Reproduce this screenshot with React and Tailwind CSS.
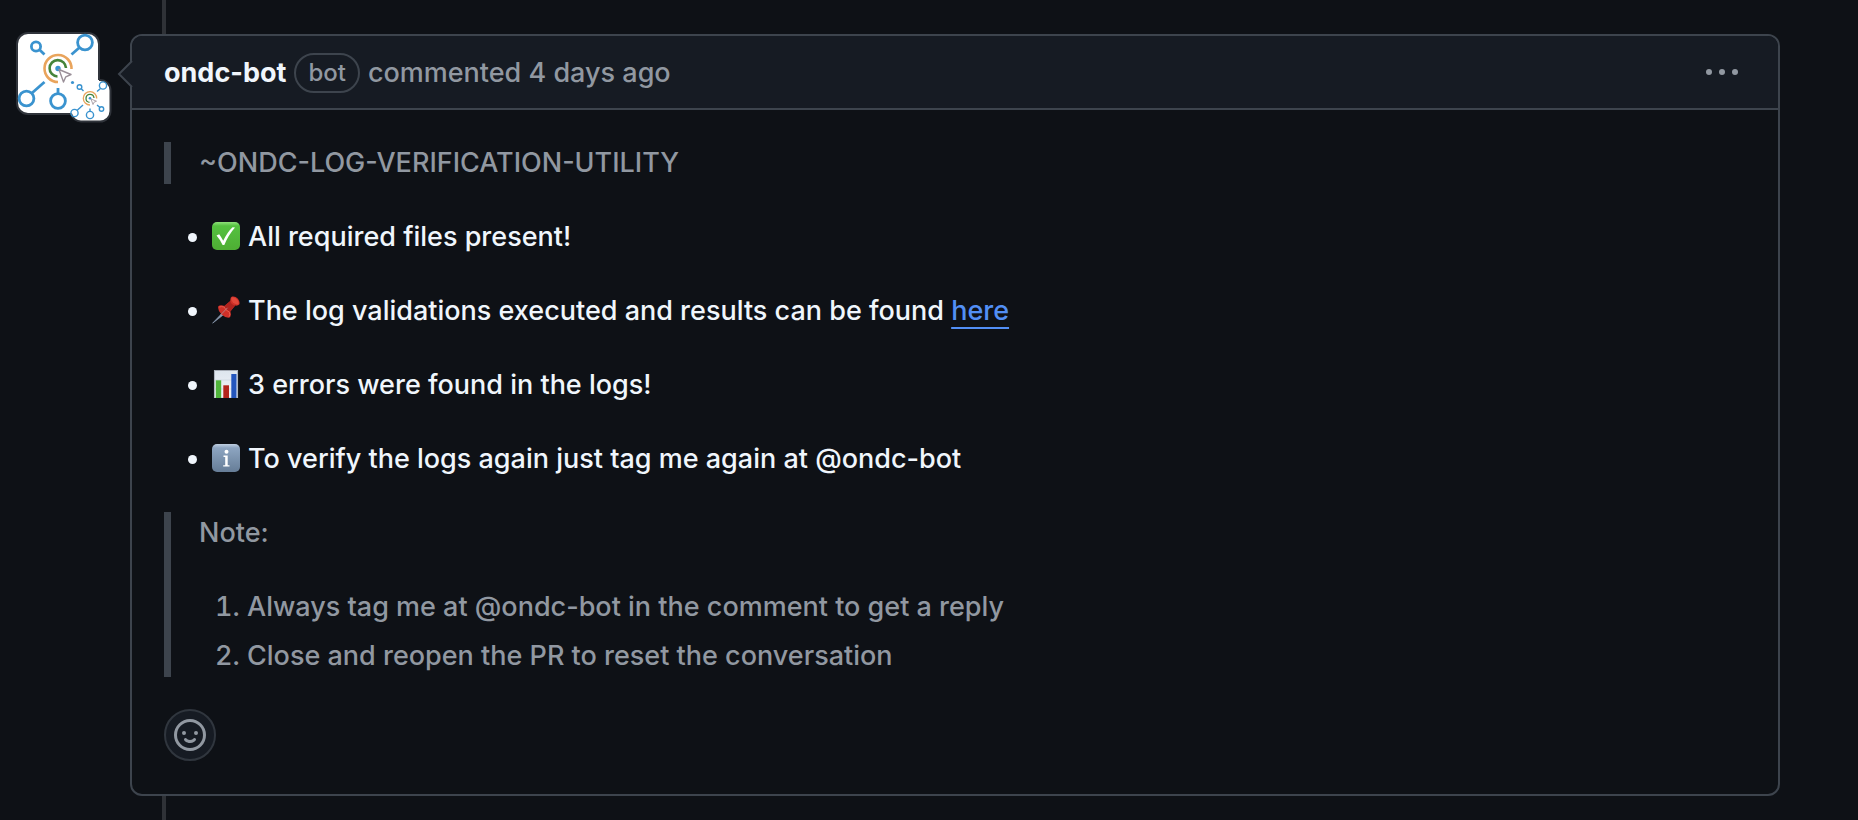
const EMOJI_CLASS = "mr-2 inline-block size-7 shrink-0 align-[-4px]";

function BotArt() {
  return (
    <>
      <g fill="none" stroke="#3a93cf" strokeWidth="2.8">
        <circle cx="19" cy="14.500" r="4.600" />
        <path d="M22.500 17.800 27.500 22.500" />
        <circle cx="68" cy="10.500" r="7.400" />
        <path d="M62.500 15.500 54.500 22.500" />
        <circle cx="9.500" cy="66.500" r="7.400" />
        <path d="M15 61 27.500 50" />
        <circle cx="41" cy="69" r="7.400" />
        <path d="M41 61.500V56" />
      </g>
      <path d="M54.500 37A13.500 13.500 0 1 0 41 50" fill="none" stroke="#e9a45c" strokeWidth="2.6" />
      <path d="M49 36A8.200 8.200 0 1 0 40.500 44.500" fill="none" stroke="#45843a" strokeWidth="2.6" />
      <circle cx="41" cy="36.500" r="2.700" fill="#3a93cf" />
    </>
  );
}

function Cursor() {
  return (
    <path
      d="M42 37.500 54 42.500 48.800 44.800 46.500 50Z"
      fill="#fff"
      stroke="#9a8f98"
      strokeWidth="1.400"
      strokeLinejoin="round"
    />
  );
}

function Avatar() {
  return (
    <a href="#ondc-bot" aria-label="ondc-bot" className="block shrink-0">
      <svg viewBox="0 0 96 92" className="h-[92px] w-[96px]" aria-hidden="true">
        <rect x="1" y="1" width="82" height="81" rx="11" fill="#fff" stroke="#30343b" strokeWidth="2" />
        <g transform="translate(1 0)">
          <BotArt />
          <Cursor />
        </g>
        <rect x="54.500" y="48" width="40" height="41.500" rx="10" fill="#fff" />
        <path
          d="M83 48h1a10.500 10.500 0 0 1 10.500 10.500v20.500a10.500 10.500 0 0 1-10.500 10.500H65a10.500 10.500 0 0 1-10-8"
          fill="none"
          stroke="#30343b"
          strokeWidth="2"
        />
        <circle cx="56.500" cy="50.500" r="1.600" fill="#3a93cf" />
        <g transform="translate(1 0)">
          <g fill="none" stroke="#3a93cf" strokeWidth="1.400">
            <circle cx="62.500" cy="55" r="2.300" />
            <path d="M64 56.500 66.500 59" />
            <circle cx="86" cy="53.500" r="3.600" />
            <path d="M83.500 56.500 80 59.500" />
            <circle cx="57.500" cy="81" r="3.600" />
            <path d="M60 78.500 66 73" />
            <circle cx="73" cy="83" r="3.600" />
            <path d="M73 79.400V76.500" />
            <circle cx="84.500" cy="77" r="2.200" />
            <path d="M83 75.500 80 73" />
          </g>
          <path d="M79.700 66.500A6.700 6.700 0 1 0 73 73" fill="none" stroke="#e9a45c" strokeWidth="1.300" />
          <path d="M77 66A4 4 0 1 0 72.500 70.300" fill="none" stroke="#45843a" strokeWidth="1.300" />
          <circle cx="73" cy="66.300" r="1.300" fill="#3a93cf" />
          <path d="M74 67 79.500 69.200 77 70.200 76 72.500Z" fill="#fff" stroke="#9a8f98" strokeWidth="0.800" />
        </g>
      </svg>
    </a>
  );
}

function CheckEmoji() {
  return (
    <svg viewBox="0 0 28 28" className={EMOJI_CLASS} role="img" aria-label="Check mark">
      <defs>
        <linearGradient id="check-fill" x1="0" y1="0" x2="0" y2="1">
          <stop offset="0" stopColor="#8fe07a" />
          <stop offset="0.140" stopColor="#55c140" />
          <stop offset="1" stopColor="#4eae34" />
        </linearGradient>
      </defs>
      <rect width="28" height="28" rx="5" fill="url(#check-fill)" />
      <path d="M4.500 13.600 7.200 12.200Q9.300 15 11.200 18.800 15.500 9.800 20.600 5.200L23 5.600Q16.500 13 12.300 23H10.600Q8.200 17.800 4.500 13.600Z" fill="#fff" />
    </svg>
  );
}

function PinEmoji() {
  return (
    <svg viewBox="0 0 28 28" className={EMOJI_CLASS} role="img" aria-label="Pushpin">
      <path d="M0.600 27.200 11 16.200 12.700 17.800Z" fill="#8b9bb0" stroke="#8b9bb0" strokeWidth="0.700" />
      <path
        d="M6.300 10.200Q8.300 8.700 12.400 9.900L18.300 5Q18 1.600 20 0.600 23.200-.2 25.900 2.800 28.200 6 27.400 8.200 26.200 9.900 23.200 9.600L18.300 15.400Q19.700 19.600 17.600 21.600 13.800 22.300 9.600 18.400 5.200 14 6.300 10.200Z"
        fill="#cf3028"
      />
      <path d="M18.300 5Q19 8.800 23.200 9.600L18.300 15.400Q14 14.600 12.400 9.900Z" fill="#ad231f" />
      <path d="M19.500 1.500Q22.500.8 25.400 3.800 27.300 6.600 26.600 8.300 23.200 9 20.700 6.300 18.600 3.700 19.500 1.500Z" fill="#e2483b" />
      <path d="M7.200 11Q9.500 10.200 12.100 11 13.400 14.200 17.400 16.200 18.300 19 17 20.700" fill="none" stroke="#e75a4b" strokeWidth="1" />
      <path d="M8.500 19 15.500 11.800" stroke="#b77a80" strokeWidth="1" />
    </svg>
  );
}

function ChartEmoji() {
  return (
    <svg viewBox="0 0 28 28" className={EMOJI_CLASS} role="img" aria-label="Bar chart">
      <defs>
        <linearGradient id="chart-paper" x1="0" y1="0" x2="0" y2="1">
          <stop offset="0" stopColor="#dde5ee" />
          <stop offset="1" stopColor="#f3f6f9" />
        </linearGradient>
      </defs>
      <rect x="2.300" y="0.500" width="23.400" height="27.500" fill="url(#chart-paper)" stroke="#b9c1cb" strokeWidth="0.700" />
      <path d="M2.500 10H25.500M2.500 19H25.500" stroke="#c6d0dc" strokeWidth="0.600" />
      <path d="M3.800 10.300H9.200V28H3.800Z" fill="#50b53b" />
      <path d="M11.300 15.300H17V28H11.300Z" fill="#b3251c" />
      <path d="M19.300 4H24.500V28H19.300Z" fill="#2456bd" />
    </svg>
  );
}

function InfoEmoji() {
  return (
    <svg viewBox="0 0 28 28" className={EMOJI_CLASS} role="img" aria-label="Information">
      <defs>
        <linearGradient id="info-fill" x1="0" y1="0" x2="0" y2="1">
          <stop offset="0" stopColor="#c0d0e2" />
          <stop offset="0.140" stopColor="#8da5c1" />
          <stop offset="1" stopColor="#667d97" />
        </linearGradient>
      </defs>
      <rect width="28" height="28" rx="5" fill="url(#info-fill)" />
      <circle cx="14.500" cy="7.700" r="2" fill="#fff" />
      <path d="M11.500 11.500H15.700V21.200H17.500V22.600H11.200V21.200H13.200V12.900H11.500Z" fill="#fff" />
    </svg>
  );
}

function CommentHeader() {
  return (
    <header className="flex h-[74px] items-center justify-between rounded-t-[10px] border-b-2 border-[#3d444d] bg-[#161b23] px-8 pt-px">
      <div className="flex items-center gap-2 text-[#9198a1]">
        <a href="#ondc-bot" className="font-bold text-[#f0f6fc]">
          ondc-bot
        </a>
        <span className="flex h-10 items-center rounded-full border-2 border-[#3d444d] px-3 text-2xl font-medium">
          bot
        </span>
        <span>
          commented <a href="#comment">4 days ago</a>
        </span>
      </div>
      <button type="button" aria-label="Show options" className="flex h-8 items-center px-2">
        <svg viewBox="0 0 32 8" className="h-2 w-8" fill="#9198a1" aria-hidden="true">
          <circle cx="3" cy="3" r="3" />
          <circle cx="16" cy="3" r="3" />
          <circle cx="29" cy="3" r="3" />
        </svg>
      </button>
    </header>
  );
}

function CommentBody() {
  return (
    <div className="flex flex-col gap-8 px-8 pt-8 pb-[33px]">
      <blockquote className="border-l-[7px] border-[#3d444d] pl-7 text-[#9198a1]">
        <p>~ONDC-LOG-VERIFICATION-UTILITY</p>
      </blockquote>
      <ul className="flex list-disc flex-col gap-8 pl-12">
        <li>
          <CheckEmoji />
          All required files present!
        </li>
        <li>
          <PinEmoji />
          The log validations executed and results can be found{" "}
          <a href="#results" className="text-[#528ff5] underline decoration-2 underline-offset-[7px]">
            here
          </a>
        </li>
        <li>
          <ChartEmoji />3 errors were found in the logs!
        </li>
        <li>
          <InfoEmoji />
          To verify the logs again just tag me again at @ondc-bot
        </li>
      </ul>
      <blockquote className="flex flex-col gap-8 border-l-[7px] border-[#3d444d] pl-7 text-[#9198a1]">
        <p>Note:</p>
        <ol className="flex list-decimal flex-col gap-[7px] pl-12">
          <li>Always tag me at @ondc-bot in the comment to get a reply</li>
          <li>Close and reopen the PR to reset the conversation</li>
        </ol>
      </blockquote>
      <button
        type="button"
        aria-label="Add your reaction"
        className="flex size-[52px] items-center justify-center rounded-full border-2 border-[#30363e] bg-[#161b23] text-[#9198a1]"
      >
        <svg viewBox="0 0 16 16" className="size-8" fill="currentColor" aria-hidden="true">
          <path d="M8 0a8 8 0 1 1 0 16A8 8 0 0 1 8 0ZM1.500 8a6.500 6.500 0 1 0 13 0 6.500 6.500 0 0 0-13 0Zm3.820 1.636a.75.75 0 0 1 1.038.175l.007.009c.103.118.22.222.35.31.264.178.683.370 1.285.370.602 0 1.020-.192 1.285-.371.130-.088.247-.192.350-.310l.007-.008a.75.75 0 0 1 1.222.870l-.022-.015c.020.013.021.015.021.015v.001l-.001.002-.002.003-.005.007-.014.019a2.066 2.066 0 0 1-.184.213c-.160.166-.338.316-.530.445-.630.418-1.370.638-2.127.629-.946 0-1.652-.308-2.126-.630a3.331 3.331 0 0 1-.715-.657l-.014-.020-.005-.006-.002-.003v-.002h-.001l.613-.432-.614.430a.75.75 0 0 1 .183-1.044ZM12 7a1 1 0 1 1-2 0 1 1 0 0 1 2 0ZM5 8a1 1 0 1 1 0-2 1 1 0 0 1 0 2Z" />
        </svg>
      </button>
    </div>
  );
}

export default function App() {
  return (
    <main className="relative min-h-screen bg-[#0e1116] pt-8 pr-[78px] pb-6 pl-4 font-['Inter',sans-serif] text-[27px] leading-[42px] font-[450] text-[#f0f6fc]">
      <div className="absolute inset-y-0 left-[162px] w-1 bg-[#2f3237]" />
      <div className="relative flex items-start gap-[18px]">
        <Avatar />
        <article className="relative mt-0.5 min-w-0 flex-1 rounded-xl border-2 border-[#3d444d] bg-[#0e1116]">
          <CommentHeader />
          <svg viewBox="0 0 17 30" className="absolute top-[23px] -left-[15px] h-[30px] w-[17px]" aria-hidden="true">
            <path d="M17 0 2 15 17 30Z" fill="#161b23" />
            <path d="M15 2 2 15 15 28" fill="none" stroke="#3d444d" strokeWidth="2" />
          </svg>
          <CommentBody />
        </article>
      </div>
    </main>
  );
}
